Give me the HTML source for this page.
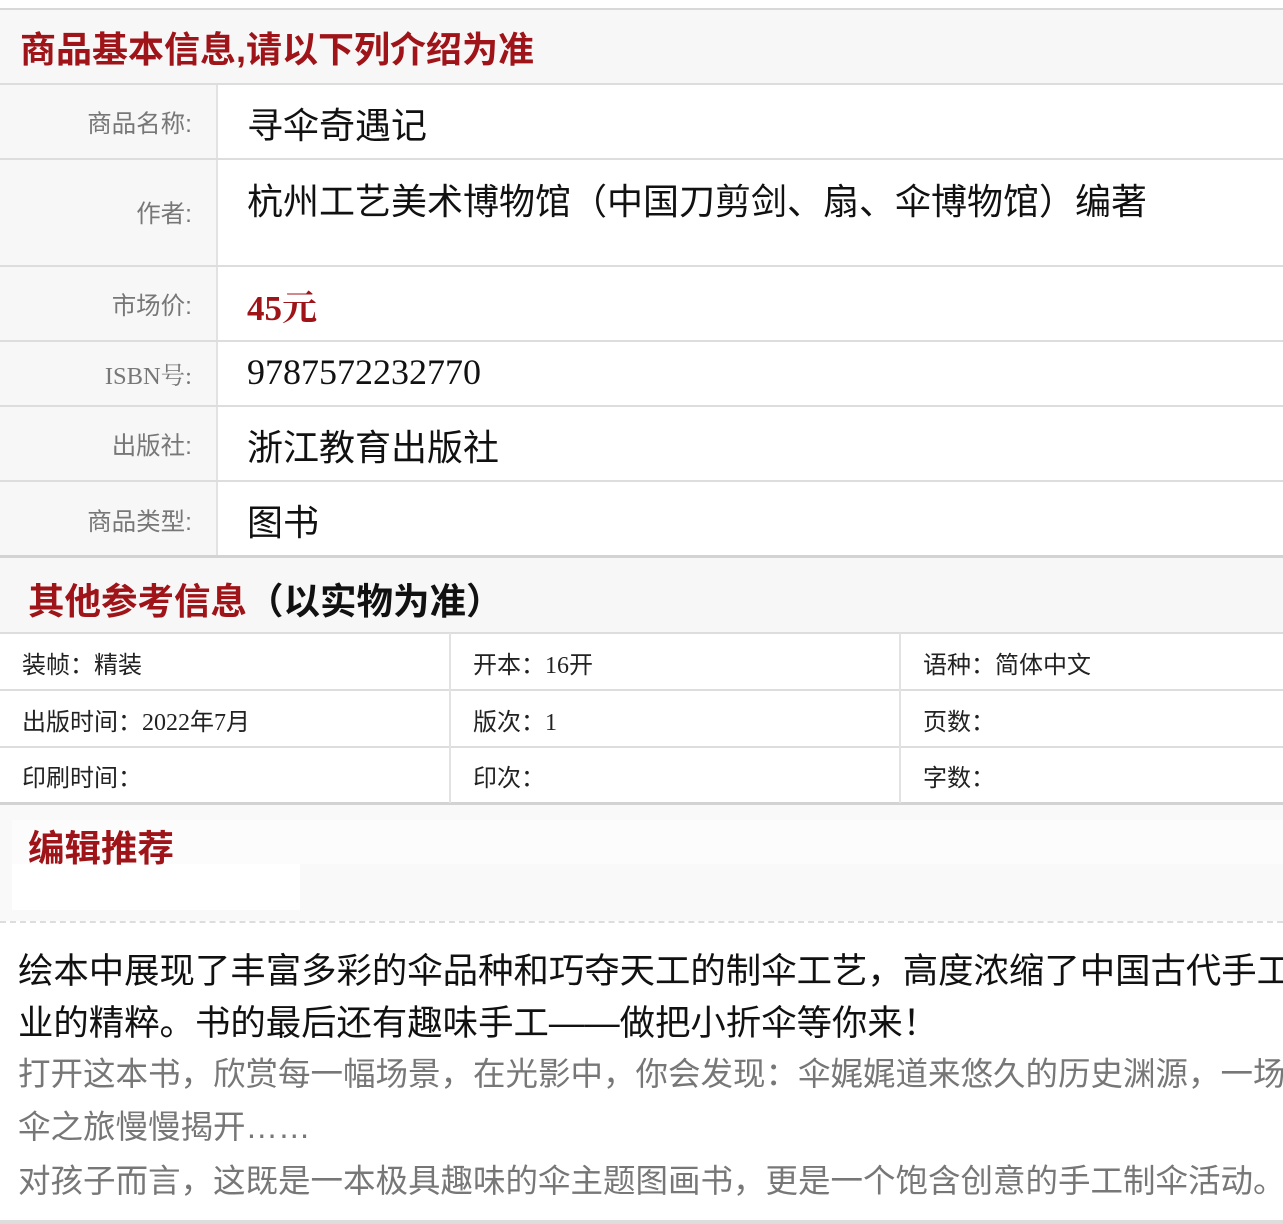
<!DOCTYPE html>
<html><head><meta charset="utf-8"><style>
*{margin:0;padding:0;box-sizing:border-box}
body{width:1283px;height:1224px;background:#fff;position:relative;overflow:hidden;font-family:"Liberation Sans","Noto Sans CJK SC",sans-serif}
.a{position:absolute;white-space:nowrap}
.hl{position:absolute;left:0;width:1283px;background:#ddd}
.vl{position:absolute;width:2px;background:#e2e2e2}
.lab{position:absolute;left:0;width:192px;text-align:right;font-size:24.5px;color:#777;white-space:nowrap}
.val{position:absolute;left:247px;font-size:36px;color:#111;white-space:nowrap}
.red{color:#9e1418;font-weight:bold}
.cell{position:absolute;font-size:24px;color:#222;white-space:nowrap}
.serif{font-family:"Liberation Serif","Noto Serif CJK SC",serif}
</style></head><body>
<div class="hl" style="top:8px;height:2px;background:#d8d8d8"></div>
<div class="a" style="top:10px;left:0;width:1283px;height:74px;background:#f7f7f7"></div>
<div class="a red" style="left:20px;top:21px;font-size:36px">商品基本信息,请以下列介绍为准</div>
<div class="a" style="top:84px;left:0;width:217px;height:472px;background:#f7f7f7"></div>
<div class="vl" style="left:216px;top:84px;height:472px"></div>
<div class="hl" style="top:83px;height:2px"></div>
<div class="hl" style="top:158px;height:2px"></div>
<div class="hl" style="top:265px;height:2px"></div>
<div class="hl" style="top:340px;height:2px"></div>
<div class="hl" style="top:405px;height:2px"></div>
<div class="hl" style="top:480px;height:2px"></div>
<div class="hl" style="top:555px;height:3px;background:#d3d3d3"></div>
<div class="lab" style="top:105px">商品名称:</div>
<div class="val" style="top:97px">寻伞奇遇记</div>
<div class="lab" style="top:195px">作者:</div>
<div class="val" style="top:173px">杭州工艺美术博物馆（中国刀剪剑、扇、伞博物馆）编著</div>
<div class="lab" style="top:287px">市场价:</div>
<div class="val red serif" style="top:281px;font-size:35px">45元</div>
<div class="lab serif" style="top:357px">ISBN号:</div>
<div class="val serif" style="top:351px;font-size:36px">9787572232770</div>
<div class="lab" style="top:427px">出版社:</div>
<div class="val" style="top:419px">浙江教育出版社</div>
<div class="lab" style="top:503px">商品类型:</div>
<div class="val" style="top:494px">图书</div>

<div class="a" style="top:558px;left:0;width:1283px;height:75px;background:#f7f7f7"></div>
<div class="a" style="left:28px;top:572px;font-size:36.5px;font-weight:bold;color:#111"><span style="color:#9e1418">其他参考信息</span>（以实物为准）</div>
<div class="hl" style="top:632px;height:2px"></div>
<div class="hl" style="top:689px;height:2px"></div>
<div class="hl" style="top:746px;height:2px"></div>
<div class="hl" style="top:802px;height:3px;background:#d3d3d3"></div>
<div class="vl" style="left:449px;top:633px;height:170px"></div>
<div class="vl" style="left:899px;top:633px;height:170px"></div>
<div class="cell" style="left:22px;top:645px">装帧：精装</div>
<div class="cell" style="left:473px;top:645px">开本：<span class="serif">16</span>开</div>
<div class="cell" style="left:923px;top:645px">语种：简体中文</div>
<div class="cell" style="left:22px;top:702px">出版时间：<span class="serif">2022</span>年<span class="serif">7</span>月</div>
<div class="cell" style="left:473px;top:702px">版次：<span class="serif">1</span></div>
<div class="cell" style="left:923px;top:702px">页数：</div>
<div class="cell" style="left:22px;top:758px">印刷时间：</div>
<div class="cell" style="left:473px;top:758px">印次：</div>
<div class="cell" style="left:923px;top:758px">字数：</div>

<div class="a" style="top:805px;left:0;width:1283px;height:116px;background:#f9f9f9"></div>
<div class="a" style="top:820px;left:12px;width:1271px;height:44px;background:#fcfcfc"></div>
<div class="a" style="top:864px;left:12px;width:288px;height:46px;background:#fff"></div>
<div class="a red" style="left:28px;top:819px;font-size:36.5px">编辑推荐</div>
<div class="a" style="top:921px;left:0;width:1283px;border-top:2px dashed #ddd"></div>
<div class="a" style="left:18px;top:943px;font-size:35.4px;color:#111">绘本中展现了丰富多彩的伞品种和巧夺天工的制伞工艺，高度浓缩了中国古代手工</div>
<div class="a" style="left:18px;top:995px;font-size:35.4px;color:#111">业的精粹。书的最后还有趣味手工——做把小折伞等你来！</div>
<div class="a" style="left:18px;top:1048px;font-size:32.5px;color:#777">打开这本书，欣赏每一幅场景，在光影中，你会发现：伞娓娓道来悠久的历史渊源，一场</div>
<div class="a" style="left:18px;top:1101px;font-size:32.5px;color:#777">伞之旅慢慢揭开……</div>
<div class="a" style="left:18px;top:1155px;font-size:32.5px;color:#777">对孩子而言，这既是一本极具趣味的伞主题图画书，更是一个饱含创意的手工制伞活动。</div>
<div class="hl" style="top:1220px;height:4px;background:#ddd"></div>
</body></html>
